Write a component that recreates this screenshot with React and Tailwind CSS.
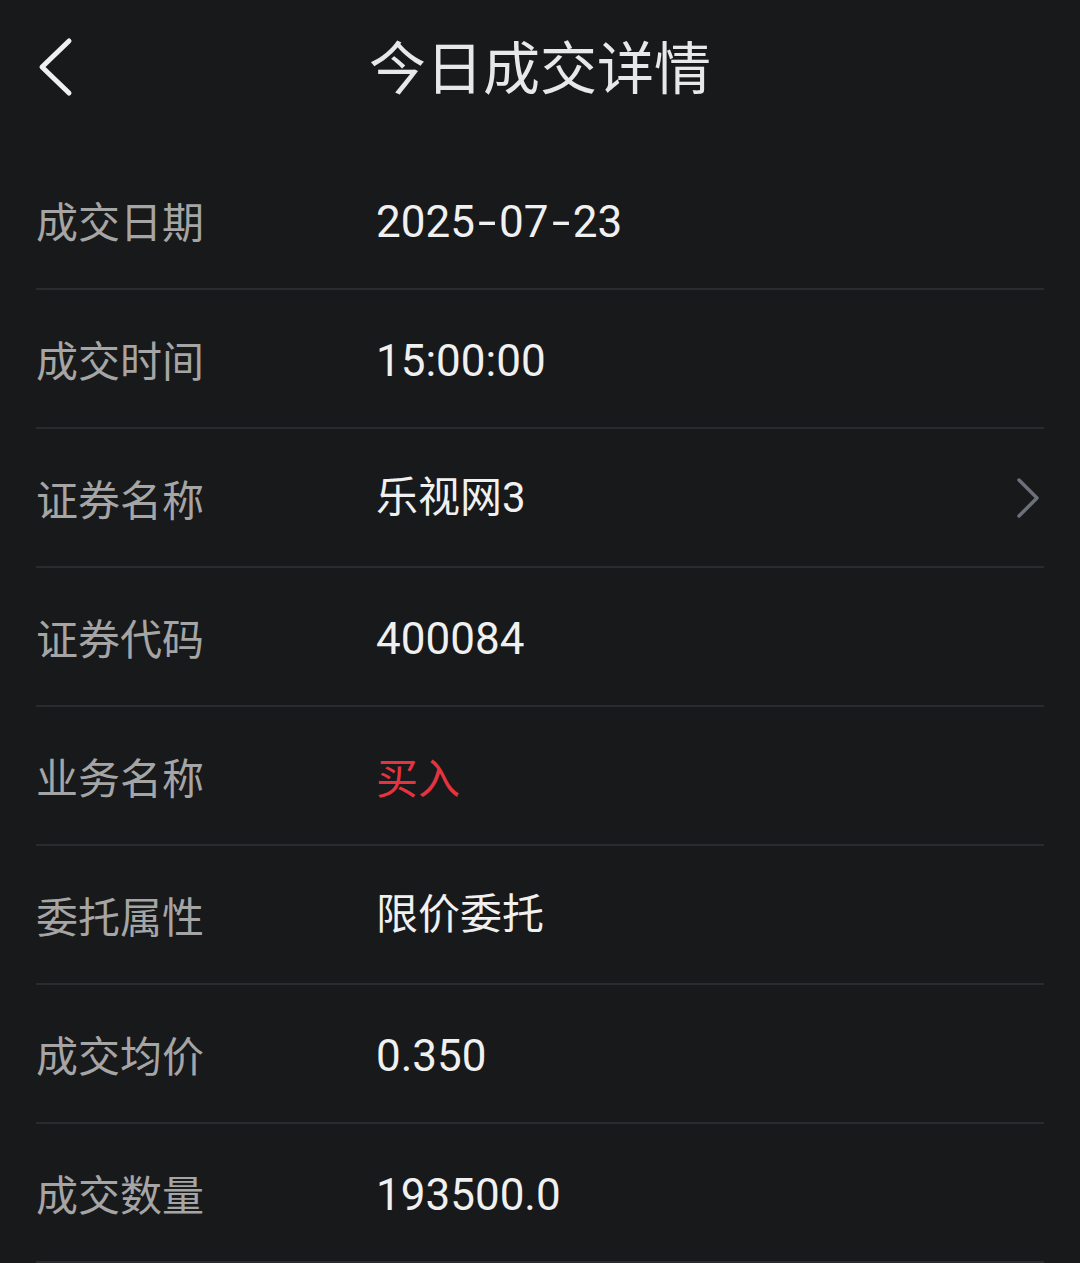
const rows = [
  { label: '成交日期', value: '2025-07-23', num: true },
  { label: '成交时间', value: '15:00:00', num: true },
  { label: '证券名称', value: '乐视网3', arrow: true },
  { label: '证券代码', value: '400084', num: true },
  { label: '业务名称', value: '买入', red: true },
  { label: '委托属性', value: '限价委托' },
  { label: '成交均价', value: '0.350', num: true },
  { label: '成交数量', value: '193500.0', num: true },
]

function Value({ text }) {
  // hyphens in the date are drawn wider in the original
  const parts = text.split('-')
  return parts.map((p, i) => (
    <span key={i}>
      {i > 0 && <span className="mx-[6px] inline-block scale-x-[1.5]">-</span>}
      {p}
    </span>
  ))
}

export default function App() {
  return (
    <div className="min-h-[1263px] w-[1080px] bg-[#18191b] font-['Roboto','Noto_Sans_CJK_SC',sans-serif]">
      <header className="relative flex h-[134px] items-center justify-center">
        <svg className="absolute left-[36px] top-[36px]" width="38" height="62" viewBox="0 0 38 62" fill="none">
          <path d="M33 5 L6 31 L33 57" stroke="#f0f0f0" strokeWidth="5" strokeLinecap="round" strokeLinejoin="round" />
        </svg>
        <h1 className="-mt-[6px] text-[57px] leading-none text-[#e8e8e8] font-['Noto_Sans_CJK_SC',sans-serif]">今日成交详情</h1>
      </header>
      <div className="mt-[17px] px-[36px]">
        {rows.map((r) => (
          <div key={r.label} className="flex h-[139px] items-center border-b-2 border-[#2a2b2e]">
            <div className="w-[340px] shrink-0 text-[42px] leading-none text-[#a5a5a5] font-['Noto_Sans_CJK_SC',sans-serif]">
              {r.label}
            </div>
            <div
              className={
                r.num
                  ? 'flex-1 pt-[4px] text-[44px] leading-none text-[#f0f0f0]'
                  : r.red
                  ? "flex-1 text-[42px] leading-none text-[#e5343f] font-['Noto_Sans_CJK_SC',sans-serif]"
                  : 'flex-1 text-[42px] leading-none text-[#f0f0f0]'
              }
            >
              {r.num ? <Value text={r.value} /> : r.value}
            </div>
            {r.arrow && (
              <svg className="mr-[4px]" width="24" height="42" viewBox="0 0 24 42" fill="none">
                <path d="M3 3 L21 21 L3 39" stroke="#6b7079" strokeWidth="3.5" strokeLinecap="round" strokeLinejoin="round" />
              </svg>
            )}
          </div>
        ))}
      </div>
    </div>
  )
}
